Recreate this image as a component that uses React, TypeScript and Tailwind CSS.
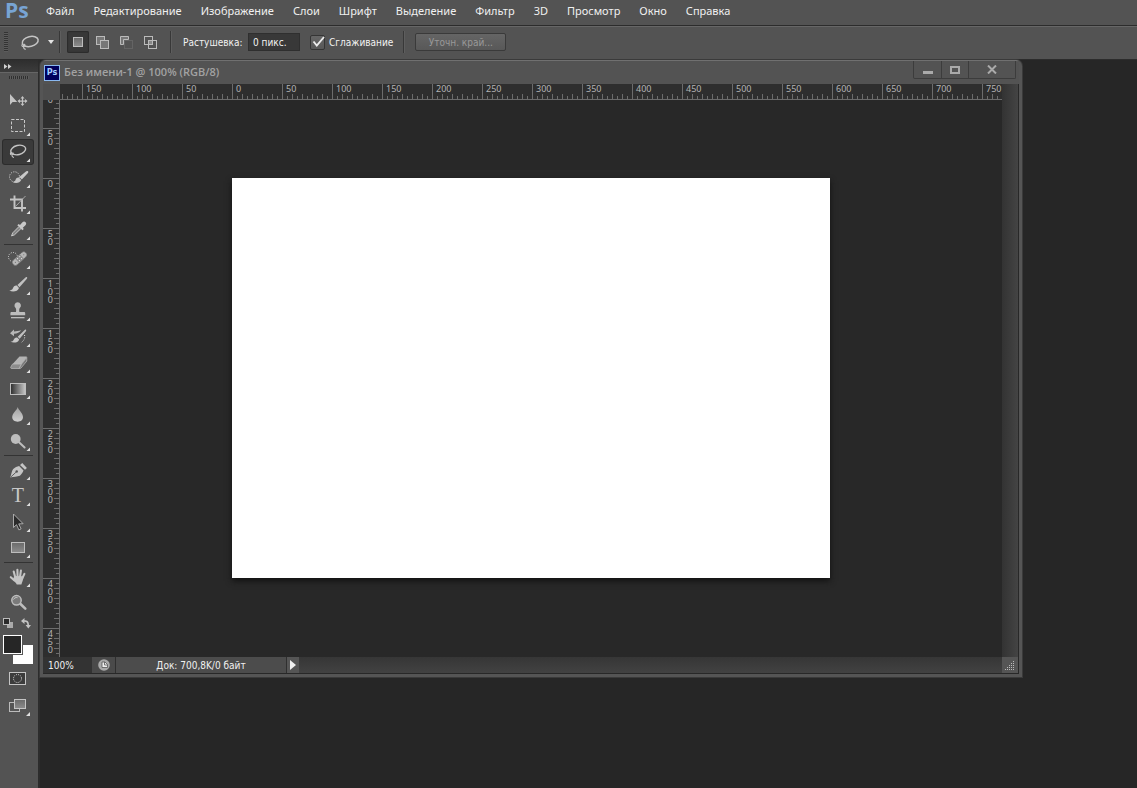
import { useState, type ReactNode } from "react"
import clsx from "clsx"

const MENU = [
  "Файл",
  "Редактирование",
  "Изображение",
  "Слои",
  "Шрифт",
  "Выделение",
  "Фильтр",
  "3D",
  "Просмотр",
  "Окно",
  "Справка",
]

const H_LABELS = ["", 150, 100, 50, 0, 50, 100, 150, 200, 250, 300, 350, 400, 450, 500, 550, 600, 650, 700, 750]
const V_LABELS = [100, 50, 0, 50, 100, 150, 200, 250, 300, 350, 400, 450]
const TICKS = [0, 1, 2, 3, 4, 5, 6, 7, 8, 9]

type Tool = { id: string; label: string; icon: ReactNode; single?: boolean }

const LASSO = (
  <g fill="none" stroke="#c4c4c4" strokeWidth="1.4">
    <ellipse cx="18.2" cy="11" rx="7.6" ry="4.6" transform="rotate(-14 18.2 11)" />
    <path d="M11.5 13.2c-1.6.8-1.4 2.6.2 2.6 1.500 0 2.200-1.600.8-2.300M12.200 15.800c-.4 1.300.2 2.200 1.800 2.600" strokeWidth="1.100" />
  </g>
)

// every tool icon is drawn in a 30x24 box whose origin is 3,1
const GROUPS: Tool[][] = [
  [
    {
      id: "move",
      label: "Перемещение",
      single: true,
      icon: (
        <g fill="#c4c4c4">
          <path d="M10 7v11l2.600-3h4.600z" />
          <path d="M22.500 9l-2 2.400h1.400v2h-2V12l-2.400 2.100 2.400 2.100v-1.500h2v2h-1.400l2 2.400 2-2.400h-1.400v-2h2v1.500l2.400-2.100-2.400-2.100v1.400h-2v-2h1.400z" />
        </g>
      ),
    },
    {
      id: "marquee",
      label: "Прямоугольная область",
      icon: <rect x="11.500" y="6.500" width="13" height="12" fill="none" stroke="#c8c8c8" strokeDasharray="3 1.500" />,
    },
    { id: "lasso", label: "Лассо", icon: LASSO },
    {
      id: "quick",
      label: "Быстрое выделение",
      icon: (
        <>
          <circle cx="14.500" cy="11.800" r="5" fill="none" stroke="#ccc" strokeDasharray="1.200 1.200" />
          <path d="M28 6.300c-.8-.7-1.700-.3-2.400.4L19.300 12l2.500 2.600 5.900-6.400c.6-.7.9-1.300.3-1.900z" fill="#c8c8c8" />
          <path d="M18.800 12.500c-2-.2-3 1-3.200 2.300-.2 1.200-1.100 2-2.800 2.500 2.900 1.300 7.300.9 8.400-2.300z" fill="#c4c4c4" />
        </>
      ),
    },
    {
      id: "crop",
      label: "Рамка",
      icon: (
        <>
          <path d="M14.500 4.500v12.500H26M10 8.500h12v12" fill="none" stroke="#c4c4c4" strokeWidth="1.900" />
          <path d="M25.500 5L15.500 15.500" stroke="#b0b0b0" strokeWidth=".9" />
        </>
      ),
    },
    {
      id: "eyedropper",
      label: "Пипетка",
      icon: (
        <>
          <path d="M19 9.500l-6.300 6.400-1.200 3 3-1.100 6.600-6.400" fill="#858585" stroke="#c8c8c8" />
          <path d="M17.300 8.200l1.400-1.300 1.300 1 2.200-2.400c1.200-1.300 2.600-1.200 3.400-.3.900.9.700 2.200-.4 3.200l-2.400 2.300 1 1.300-1.400 1.300z" fill="#c8c8c8" />
        </>
      ),
    },
  ],
  [
    {
      id: "healing",
      label: "Восстанавливающая кисть",
      icon: (
        <>
          <circle cx="13" cy="11" r="4.500" fill="none" stroke="#ddd" strokeDasharray="1 1.300" />
          <g transform="rotate(-42 19.500 12.500)">
            <rect x="10.800" y="9.500" width="17.400" height="6.200" rx="3" fill="#b6b6b6" stroke="#555" strokeWidth=".5" />
            <rect x="16.300" y="9.500" width="6.400" height="6.200" fill="#8b8b8b" />
            <g fill="#e8e8e8">
              <circle cx="18" cy="11.300" r=".6" />
              <circle cx="21" cy="11.300" r=".6" />
              <circle cx="18" cy="14" r=".6" />
              <circle cx="21" cy="14" r=".6" />
              <circle cx="13.800" cy="12.600" r=".5" fill="#666" />
              <circle cx="25.200" cy="12.600" r=".5" fill="#666" />
            </g>
          </g>
        </>
      ),
    },
    {
      id: "brush",
      label: "Кисть",
      icon: (
        <>
          <path d="M27 5.200c-.7-.5-1.200-.1-1.800.5l-7.800 7.300 2.100 2.200 7.200-8.200c.5-.6.800-1.300.3-1.800z" fill="#c0c0c0" />
          <path d="M16.800 13.600c-2.300-.2-3.300 1.200-3.900 2.600-.5 1.300-1.600 2.200-3.600 2.400 3.200 1.600 8.600 1.100 9.700-2.700z" fill="#c8c8c8" />
        </>
      ),
    },
    {
      id: "stamp",
      label: "Штамп",
      icon: (
        <g fill="#bdbdbd">
          <path d="M17.700 4.200a3.300 3.300 0 0 1 2.300 5.600c-.9 1-.9 2.400-.6 4.200h4.500c.8 0 1.300.5 1.300 1.300v1.900H10.400v-1.900c0-.8.5-1.300 1.300-1.300H16c.3-1.800.3-3.200-.6-4.200a3.300 3.300 0 0 1 2.300-5.600z" />
          <rect x="11" y="19" width="13.500" height="1.300" />
        </g>
      ),
    },
    {
      id: "history",
      label: "Архивная кисть",
      icon: (
        <>
          <path d="M26 5.700c-.6-.4-1.100 0-1.600.5l-6.700 6.600 1.900 2 6.100-7.400c.5-.6.700-1.200.3-1.700z" fill="#c0c0c0" />
          <path d="M17.200 13.400c-2.100-.2-3 1-3.500 2.300-.5 1.100-1.400 1.900-3.200 2.100 2.900 1.400 7.700 1 8.700-2.400z" fill="#c8c8c8" />
          <path d="M10 9.200l4-3.700v2.100c2.500-.4 4.500-.6 7.200-1.400-1.800 2.300-4 3.300-7.200 3.600v2.400z" fill="#b8b8b8" />
          <path d="M24.500 11c.8 3-.5 6-4 8" fill="none" stroke="#ddd" strokeDasharray="1 1.400" />
        </>
      ),
    },
    {
      id: "eraser",
      label: "Ластик",
      icon: (
        <>
          <path d="M19.500 6.500h6.600c.6 0 .9.500.6 1l-5.200 6.700H12.400z" fill="#b4b4b4" />
          <path d="M12.400 14.200h9.100l-2.300 4.300h-7.700c-.8 0-1.100-.7-.7-1.500z" fill="#8c8c8c" stroke="#c8c8c8" strokeWidth=".6" />
          <path d="M21.500 14.200l5.300-6.700v3.600l-5.800 7c-.4.300-1 .4-1.800.4z" fill="#777" stroke="#c8c8c8" strokeWidth=".6" />
        </>
      ),
    },
    {
      id: "gradient",
      label: "Градиент",
      icon: <rect x="10.500" y="7.500" width="15" height="11" fill="url(#grad-h)" stroke="#bdbdbd" />,
    },
    {
      id: "blur",
      label: "Размытие",
      icon: <path d="M17.700 5c.8 3.400 5.300 6 5.300 10.100 0 2.900-2.200 4.700-5.300 4.700s-5.500-1.800-5.500-4.700C12.200 11 17 8.400 17.700 5z" fill="url(#grad-v)" />,
    },
    {
      id: "dodge",
      label: "Осветлитель",
      icon: (
        <>
          <circle cx="15.700" cy="11" r="4.900" fill="#bdbdbd" />
          <path d="M19 14.200l5.600 5.300" stroke="#bdbdbd" strokeWidth="2" strokeLinecap="round" />
        </>
      ),
    },
  ],
  [
    {
      id: "pen",
      label: "Перо",
      icon: (
        <>
          <path d="M10.200 20.600c1.200-3 1.300-6.500 3-8.600 1.700-1.400 3.900-2.400 5.900-2.900l4.400 4.500c-.8 1.900-1.900 3.900-3.600 5.100-2.500.9-6.200.9-9.700 1.900z" fill="#c4c4c4" />
          <path d="M20 8l2.300-1.900 4.600 4.800-1.900 1.900z" fill="#c4c4c4" />
          <path d="M10.600 20.200l5.300-4.900" stroke="#555" strokeWidth=".9" />
          <circle cx="16.700" cy="14.500" r="1.200" fill="#555" />
        </>
      ),
    },
    {
      id: "type",
      label: "Текст",
      icon: (
        <text x="17.800" y="19" fontSize="20" textAnchor="middle" fill="#c8c8c8" className="font-['Liberation_Serif',serif]">
          T
        </text>
      ),
    },
    {
      id: "path",
      label: "Выделение контура",
      icon: <path d="M13.500 5v13.500l3-2.800 2.400 5.200 2.200-1-2.400-5 4.400-.2z" fill="#2b2b2b" stroke="#b4b4b4" strokeWidth=".9" />,
    },
    {
      id: "shape",
      label: "Прямоугольник",
      icon: <rect x="11.500" y="7.500" width="13" height="10" fill="url(#grad-s)" stroke="#bdbdbd" />,
    },
  ],
  [
    {
      id: "hand",
      label: "Рука",
      icon: (
        <g stroke="#c4c4c4" strokeLinecap="round" fill="none" strokeWidth="2.100">
          <path d="M15.300 13.500L13.700 7.500M17.600 13l-.2-7.200M20 13l.9-6.400M22.200 14.500l2.200-4.600M14.500 16.500l-3.700-3.300" />
          <path d="M14.300 12l9 .2c.2 3.800-1.100 5.400-1.900 8.400h-4.600c-.6-1.700-3-3.200-3.800-5z" fill="#c4c4c4" stroke="none" />
        </g>
      ),
    },
    {
      id: "zoom",
      label: "Масштаб",
      single: true,
      icon: (
        <>
          <path d="M20.500 14l4.800 4.600" stroke="#bdbdbd" strokeWidth="2.600" strokeLinecap="round" />
          <circle cx="16.500" cy="10.300" r="4.700" fill="#7a7a7a" stroke="#bdbdbd" strokeWidth="1.500" />
          <path d="M13.500 9.500c.7-1.600 2.400-2.300 4-1.800" stroke="#ccc" fill="none" />
        </>
      ),
    },
  ],
]

function MenuBar() {
  return (
    <header className="flex h-[26px] items-center border-b border-[#2c2c2c] pl-1 font-['Noto_Sans',sans-serif] text-[11px] text-[#f0f0f0]">
      <span className="w-[33px] pb-1.5 pl-px font-['Open_Sans',sans-serif] text-[21px] leading-5 font-bold text-[#78a4d4]">Ps</span>
      <nav className="flex gap-px pb-[3px]">
        {MENU.map((item) => (
          <button key={item} className="px-[9px] leading-5">
            {item}
          </button>
        ))}
      </nav>
    </header>
  )
}

function Divider() {
  return <span className="h-[22px] w-0.5 border-r border-l border-r-[#5e5e5e] border-l-[#383838]" />
}

const MODES = [
  {
    label: "Новая выделенная область",
    icon: <rect x="1.500" y="1.500" width="9" height="9" fill="url(#grad-s)" stroke="#bbb" />,
  },
  {
    label: "Добавить к выделенной области",
    icon: (
      <g fill="#777" stroke="#bbb">
        <rect x=".5" y=".5" width="8" height="8" />
        <rect x="4.500" y="4.500" width="8" height="8" />
        <path d="M5 5h3v3H5z" stroke="none" />
      </g>
    ),
  },
  {
    label: "Вычитание из выделенной области",
    icon: (
      <>
        <rect x="4.500" y="4.500" width="8" height="8" fill="none" stroke="#777" strokeDasharray="1 1" />
        <path d="M.5.5h8v3h-5v5h-3z" fill="#777" stroke="#bbb" />
      </>
    ),
  },
  {
    label: "Пересечение с выделенной областью",
    icon: (
      <g fill="none" stroke="#bbb">
        <rect x=".5" y=".5" width="8" height="8" />
        <rect x="4.500" y="4.500" width="8" height="8" />
        <path d="M5 5h3v3H5z" fill="#888" stroke="none" />
      </g>
    ),
  },
]

function OptionsBar() {
  const [mode, setMode] = useState(0)
  const [feather, setFeather] = useState("0 пикс.")
  const [smooth, setSmooth] = useState(true)

  return (
    <div className="flex h-[34px] items-center border-t border-b border-t-[#666] border-b-[#2c2c2c] pb-0.5 pl-1 text-[10px] text-[#f2f2f2]">
      <span className="h-5 w-1 bg-[repeating-linear-gradient(#333_0_1px,#5c5c5c_1px_2px)]" />
      <button aria-label="Лассо" className="ml-3 flex w-[34px] items-center justify-between">
        <svg width="20" height="16" viewBox="9 4 18 15">
          {LASSO}
        </svg>
        <svg width="6" height="4" viewBox="0 0 6 4">
          <path d="M0 0h6L3 4z" fill="#e4e4e4" />
        </svg>
      </button>
      <span className="w-[5px]" />
      <Divider />
      <div className="flex gap-0.5 px-1.5">
        {MODES.map((m, i) => (
          <button
            key={m.label}
            aria-label={m.label}
            onClick={() => setMode(i)}
            className={clsx(
              "flex size-[22px] items-center justify-center rounded-xs",
              i === mode && "bg-[#383838] shadow-[inset_0_0_1px_1px_#2c2c2c]"
            )}
          >
            <svg width="13" height="13" viewBox="0 0 13 13">
              {m.icon}
            </svg>
          </button>
        ))}
      </div>
      <span className="w-[3px]" />
      <Divider />
      <label htmlFor="feather" className="ml-[11px] w-[65px] whitespace-nowrap">
        Растушевка:
      </label>
      <input
        id="feather"
        value={feather}
        onChange={(e) => setFeather(e.target.value)}
        className="h-[18px] w-[52px] border border-[#2f2f2f] bg-[#383838] px-1 outline-none"
      />
      <label className="relative ml-2.5 flex items-center gap-1 whitespace-nowrap">
        <input
          type="checkbox"
          checked={smooth}
          onChange={(e) => setSmooth(e.target.checked)}
          className="size-[15px] appearance-none rounded-xs border border-[#353535] bg-linear-to-b from-[#666] to-[#585858]"
        />
        {smooth && (
          <svg width="14" height="12" viewBox="0 0 14 12" className="pointer-events-none absolute left-0.5">
            <path d="M1.500 5.500l3.300 4L12 1" fill="none" stroke="#ececec" strokeWidth="1.900" />
          </svg>
        )}
        Сглаживание
      </label>
      <span className="w-2.5" />
      <Divider />
      <button className="ml-2.5 h-[18px] w-[91px] rounded-xs border border-[#3a3a3a] bg-linear-to-b from-[#656565] to-[#585858] text-[#999]">
        Уточн. край...
      </button>
    </div>
  )
}

function Toolbar() {
  const [active, setActive] = useState("lasso")

  return (
    <aside className="flex w-10 shrink-0 flex-col border-r-2 border-[#2c2c2c] bg-[#535353]">
      <button aria-label="Развернуть панель" className="flex h-3 items-center bg-linear-to-b from-[#2e2e2e] to-[#3c3c3c] pl-1">
        <svg width="8" height="5" viewBox="0 0 8 5">
          <path d="M0 0l3.500 2.500L0 5zM4 0l3.500 2.500L4 5z" fill="#d0d0d0" />
        </svg>
      </button>
      <div className="flex h-[15px] justify-center border-t border-[#666] pt-[3px]">
        <span className="h-[3px] w-5 bg-[repeating-linear-gradient(90deg,#2f2f2f_0_1px,#5c5c5c_1px_2px)]" />
      </div>
      {GROUPS.map((group, g) => (
        <div key={g} className="flex flex-col items-start">
          {g > 0 && <hr className="mx-1 my-px w-[29px] border-t border-[#333]" />}
          {group.map((tool) => (
            <button
              key={tool.id}
              aria-label={tool.label}
              onClick={() => setActive(tool.id)}
              className={clsx(
                "mx-[3px] my-px rounded-xs",
                tool.id === active && "bg-[#3a3a3a] shadow-[0_0_0_1px_#2c2c2c]"
              )}
            >
              <svg width="30" height="24" viewBox="3 1 30 24">
                {tool.icon}
                {!tool.single && <path d="M30 19.500v3.500h-3.500z" fill="#e0e0e0" />}
              </svg>
            </button>
          ))}
        </div>
      ))}
      <div className="flex justify-between pt-0.5 pr-[7px] pl-[3px]">
        <button aria-label="Цвета по умолчанию">
          <svg width="10" height="11" viewBox="0 0 10 11">
            <rect x="4" y="4" width="6" height="6" fill="#aaa" />
            <rect x=".5" y=".5" width="6" height="6" fill="#2a2a2a" stroke="#bbb" />
          </svg>
        </button>
        <button aria-label="Поменять цвета">
          <svg width="10" height="11" viewBox="0 0 10 11">
            <path d="M0 3l3.500-3v2.200C6.500 2.200 8 3.500 8 7h2l-2.700 3.500L4.600 7h1.800c0-2.200-.9-3.200-2.900-3.200V6z" fill="#c4c4c4" />
          </svg>
        </button>
      </div>
      <div className="mt-1.5 ml-[3px] grid w-[30px] grid-cols-[10px_9px_11px] grid-rows-[10px_9px_10px]">
        <button aria-label="Фоновый цвет" className="col-span-2 col-start-2 row-span-2 row-start-2 bg-white" />
        <button
          aria-label="Основной цвет"
          className="col-span-2 col-start-1 row-span-2 row-start-1 border border-white bg-[#262626] shadow-[0_0_0_1px_#555]"
        />
      </div>
      <button aria-label="Быстрая маска" className="mt-2 ml-[9px] w-[17px]">
        <svg width="17" height="13" viewBox="0 0 17 13">
          <rect x=".5" y=".5" width="16" height="12" fill="#3c3c3c" stroke="#c4c4c4" />
          <circle cx="8.500" cy="6.500" r="4" fill="none" stroke="#ddd" strokeDasharray="1 1.100" />
        </svg>
      </button>
      <button aria-label="Режим экрана" className="mt-3.5 ml-[9px] w-[22px]">
        <svg width="22" height="17" viewBox="0 0 22 17">
          <rect x=".5" y="3.500" width="10" height="9" fill="#555" stroke="#bbb" />
          <rect x="5.500" y=".5" width="11" height="9" fill="url(#grad-s)" stroke="#c4c4c4" />
          <path d="M21 13v4h-4z" fill="#e0e0e0" />
        </svg>
      </button>
    </aside>
  )
}

function HorizontalRuler() {
  return (
    <div className="flex h-4 min-w-0 flex-1 overflow-x-clip border-b border-[#6c6c6c] bg-[#2e2e2e]">
      {H_LABELS.map((label, i) => (
        <div
          key={i}
          className={clsx(
            "flex w-[50px] shrink-0 flex-col justify-between border-l border-[#6c6c6c]",
            i === 0 && "-ml-7"
          )}
        >
          <span className="h-2.5 pl-[3px] font-['Noto_Sans',sans-serif] text-[9px] leading-[10px] text-[#b4b4b4]">{label}</span>
          <div className="-ml-px flex h-[5px] items-end">
            {TICKS.map((t) => (
              <span key={t} className={clsx("w-[5px] border-l border-[#6c6c6c]", t % 2 ? "h-[3px]" : "h-[5px]")} />
            ))}
          </div>
        </div>
      ))}
    </div>
  )
}

function VerticalRuler() {
  return (
    <div className="flex w-[17px] shrink-0 flex-col overflow-hidden border-r border-[#6c6c6c] bg-[#2e2e2e]">
      {V_LABELS.map((label, i) => (
        <div
          key={i}
          className={clsx(
            "flex h-[50px] shrink-0 justify-between border-t border-[#6c6c6c]",
            i === 0 && "-mt-[22px]"
          )}
        >
          <span className="flex w-[11px] flex-col items-end pt-px pr-px font-['Noto_Sans',sans-serif] text-[9px] leading-[8px] text-[#b4b4b4]">
            {String(label).split("").map((digit, d) => (
              <span key={d}>{digit}</span>
            ))}
          </span>
          <div className="-mt-px flex w-[5px] flex-col items-end">
            {TICKS.map((t) => (
              <span key={t} className={clsx("h-[5px] border-t border-[#6c6c6c]", t % 2 ? "w-[3px]" : "w-[5px]")} />
            ))}
          </div>
        </div>
      ))}
    </div>
  )
}

function TitleBar() {
  return (
    <div className="flex h-[23px] shrink-0 justify-between pr-[3px]">
      <div className="flex items-center gap-1 pl-px">
        <span className="flex size-4 items-center justify-center border border-[#8ab8f0] bg-[#00005c] text-[9px] leading-none font-bold text-[#a4ccff]">
          Ps
        </span>
        <h1 className="font-['Open_Sans',sans-serif] text-[11px] font-semibold whitespace-nowrap text-[#a2a2a2]">
          Без имени-1 @ 100% (RGB/8)
        </h1>
      </div>
      <div className="flex h-[18px] rounded-b-xs border border-t-0 border-[#3c3c3c]">
        <button aria-label="Свернуть" className="flex w-7 items-center justify-center border-r border-[#3c3c3c]">
          <svg width="10" height="10" viewBox="0 0 10 10">
            <path d="M0 6h10v3H0z" fill="#aaa" />
          </svg>
        </button>
        <button aria-label="Развернуть" className="flex w-[27px] items-center justify-center border-r border-[#3c3c3c]">
          <svg width="10" height="8" viewBox="0 0 10 8">
            <path d="M1 1h8v6H1z" fill="none" stroke="#aaa" strokeWidth="2" />
          </svg>
        </button>
        <button aria-label="Закрыть" className="flex w-[46px] items-center justify-center">
          <svg width="10" height="9" viewBox="0 0 10 9">
            <path d="M1 .5l8 8M9 .5l-8 8" stroke="#aaa" strokeWidth="2" />
          </svg>
        </button>
      </div>
    </div>
  )
}

function StatusBar() {
  return (
    <footer className="flex h-4 shrink-0 text-[10px] text-[#f0f0f0]">
      <input aria-label="Масштаб" defaultValue="100%" className="w-[49px] bg-[#333] pl-[5px] outline-none" />
      <button aria-label="Сведения" className="flex w-[23px] items-center justify-center bg-[#4a4a4a]">
        <svg width="12" height="12" viewBox="0 0 12 12">
          <circle cx="6" cy="6" r="5.800" fill="#aaa" />
          <path d="M4 3h3l2.500 2.500v3H4z" fill="#eee" stroke="#555" strokeWidth=".8" />
          <path d="M6.500 3v3h3" fill="none" stroke="#555" strokeWidth=".8" />
        </svg>
      </button>
      <span className="w-[172px] border-r border-l border-[#2f2f2f] bg-[#4c4c4c] text-center leading-[18px]">Док: 700,8K/0 байт</span>
      <button aria-label="Показать" className="flex w-3 items-center justify-center bg-[#555]">
        <svg width="6" height="10" viewBox="0 0 6 10">
          <path d="M0 0l6 5-6 5z" fill="#f0f0f0" />
        </svg>
      </button>
      <div className="flex-1 bg-linear-to-b from-[#363636] to-[#424242]" />
      <div className="flex w-4 items-center justify-center bg-[#555]">
        <svg width="10" height="10" viewBox="0 0 10 10">
          <g stroke="#bbb" strokeDasharray="1 1">
            <path d="M8 1.500h2M6 3.500h4M4 5.500h6M2 7.500h8M0 9.500h10" />
          </g>
        </svg>
      </div>
    </footer>
  )
}

function DocumentWindow() {
  return (
    <section className="mr-[115px] mb-[111px] flex min-w-0 flex-1 flex-col rounded-t-md border-x-[3px] border-t border-b-[3px] border-x-[#555] border-t-[#707070] border-b-[#555] bg-[#535353] shadow-[0_0_0_1px_#3a3a3a]">
      <TitleBar />
      <div className="flex min-h-0 flex-1 flex-col border-r border-b border-[#282828] bg-[#282828]">
        <div className="flex min-h-0 flex-1">
          <div className="flex min-w-0 flex-1 flex-col">
            <div className="flex">
              <span className="h-4 w-[17px] bg-[#505050]" />
              <HorizontalRuler />
            </div>
            <div className="flex min-h-0 flex-1">
              <VerticalRuler />
              <main className="min-w-0 flex-1 overflow-hidden bg-[#282828] pt-[78px] pl-[172px]">
                <div className="h-[400px] w-[598px] bg-white shadow-[0_3px_6px_#111]" />
              </main>
            </div>
          </div>
          <div className="w-4 bg-linear-to-r from-[#333] to-[#444]" />
        </div>
        <StatusBar />
      </div>
    </section>
  )
}

export default function App() {
  return (
    <div className="flex h-screen min-h-[700px] flex-col overflow-hidden bg-[#535353] font-['DejaVu_Sans_Condensed','DejaVu_Sans',sans-serif]">
      <svg width="0" height="0" className="absolute">
        <defs>
          <linearGradient id="grad-h">
            <stop offset="0" stopColor="#2c2c2c" />
            <stop offset="1" stopColor="#c8c8c8" />
          </linearGradient>
          <linearGradient id="grad-v" x2="0" y2="1">
            <stop offset="0" stopColor="#a0a0a0" />
            <stop offset="1" stopColor="#d0d0d0" />
          </linearGradient>
          <linearGradient id="grad-s" x2="0" y2="1">
            <stop offset="0" stopColor="#6a6a6a" />
            <stop offset="1" stopColor="#8c8c8c" />
          </linearGradient>
        </defs>
      </svg>
      <MenuBar />
      <OptionsBar />
      <div className="flex min-h-0 flex-1 bg-[#262626]">
        <Toolbar />
        <DocumentWindow />
      </div>
    </div>
  )
}
